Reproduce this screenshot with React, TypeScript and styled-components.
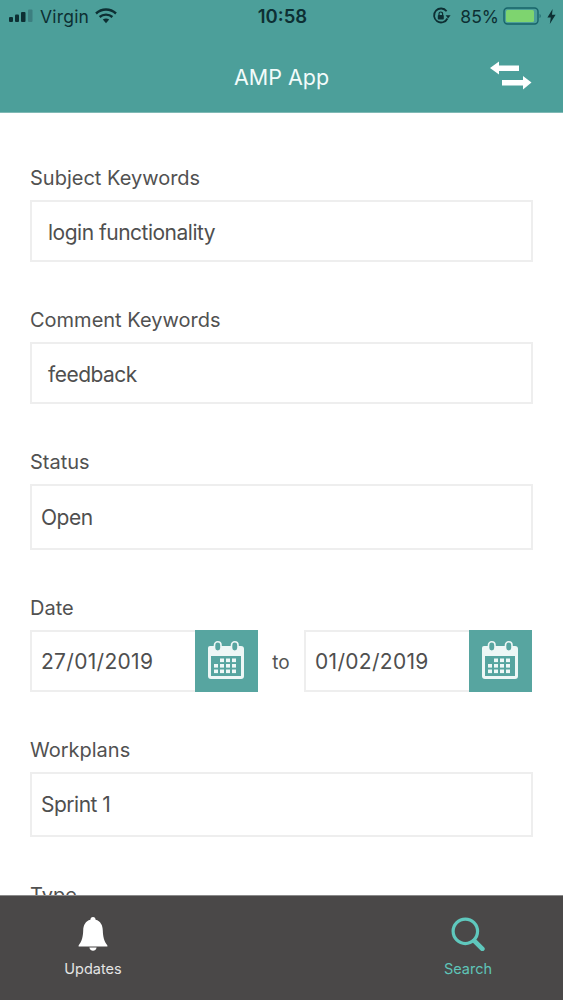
import React from 'react'
import styled, { createGlobalStyle } from 'styled-components'

const GlobalStyle = createGlobalStyle`
  html, body {
    margin: 0;
    padding: 0;
    background: #fff;
  }
  body {
    font-family: Inter, "Liberation Sans", sans-serif;
  }
`

const Screen = styled.div`
  width: 563px;
  height: 1000px;
  display: flex;
  flex-direction: column;
  overflow: hidden;
  background: #fff;
`

const Header = styled.header`
  height: 113px;
  flex-shrink: 0;
  box-sizing: border-box;
  background: #4c9f9a;
  border-bottom: 1px solid #7fb9b5;
  display: flex;
  flex-direction: column;
`

const StatusBar = styled.div`
  height: 32px;
  box-sizing: border-box;
  padding: 0 7px 0 9px;
  display: grid;
  grid-template-columns: 1fr auto 1fr;
  align-items: center;
  color: #0d2f33;
  font-size: 17.5px;
`

const StatusLeft = styled.div`
  display: flex;
  align-items: center;
  gap: 6px;
`

const Carrier = styled.span`
  margin-left: -1px;
  letter-spacing: 0.2px;
`

const StatusRight = styled.div`
  display: flex;
  align-items: center;
  justify-content: flex-end;
  gap: 5px;
`

const BatteryPercent = styled.span`
  margin: 0 -1px 0 4px;
`

const Clock = styled.div`
  font-weight: 600;
  font-size: 18.5px;
`

const TitleBar = styled.div`
  flex: 1;
  display: flex;
  align-items: center;
  justify-content: center;
  position: relative;
  padding-top: 10px;
`

const Title = styled.h1`
  margin: 0;
  font-size: 21.5px;
  font-weight: 400;
  color: #f2fbfa;
`

const SwapButton = styled.div`
  position: absolute;
  right: 31px;
  top: 28px;
  width: 42px;
  height: 30px;
`

const Form = styled.main`
  flex: 1;
  min-height: 0;
  overflow: hidden;
  box-sizing: border-box;
  padding: 53px 30px 0;
  display: flex;
  flex-direction: column;
`

const Field = styled.section`
  flex-shrink: 0;
  margin-bottom: 46px;
`

const Label = styled.div`
  height: 25px;
  margin-bottom: 9px;
  font-size: 20px;
  line-height: 25px;
  color: #515151;
`

const InputBox = styled.div<{ $inset?: number; $height?: number }>`
  height: ${(p) => p.$height ?? 62}px;
  box-sizing: border-box;
  border: 2px solid #eeeeee;
  padding-left: ${(p) => p.$inset ?? 16}px;
  padding-top: ${(p) => (p.$height ? 0 : 2)}px;
  display: flex;
  align-items: center;
  font-size: 21px;
  letter-spacing: -0.5px;
  color: #4f4f4f;
`

const DateRow = styled.div`
  display: flex;
  align-items: center;
  justify-content: space-between;
  padding-right: 1px;
`

const ToText = styled.span`
  padding-top: 2px;
  font-size: 19px;
  color: #555;
`

const DateInput = styled.div`
  width: 228px;
  height: 62px;
  box-sizing: border-box;
  border: 2px solid #eeeeee;
  border-right: 0;
  display: flex;
  align-items: center;
  justify-content: space-between;
  padding-left: 9px;
  font-size: 21px;
  letter-spacing: 0.3px;
  color: #4f4f4f;
`

const CalendarButton = styled.div`
  width: 63px;
  height: 62px;
  margin-top: -2px;
  margin-bottom: -2px;
  background: #57a5a0;
  display: flex;
  align-items: center;
  justify-content: center;
`

const TabBar = styled.nav`
  height: 105px;
  flex-shrink: 0;
  box-sizing: border-box;
  background: #4a4848;
  border-top: 1px solid #8a8a8a;
  display: flex;
  justify-content: space-between;
  padding: 20px 38px 0 36px;
`

const Tab = styled.div<{ $active?: boolean }>`
  width: 114px;
  display: flex;
  flex-direction: column;
  align-items: center;
  gap: 8px;
  font-size: 14.5px;
  color: ${(p) => (p.$active ? '#5fc4b8' : '#e4e4e4')};
`

const IconSlot = styled.div`
  height: 36px;
  display: flex;
  align-items: center;
  justify-content: center;
`

const SignalIcon = () => (
  <svg width="26" height="16" viewBox="0 0 26 16">
    <rect x="0" y="9" width="4" height="5" rx="1" fill="#0d2f33" />
    <rect x="6" y="6.5" width="4" height="7.5" rx="1" fill="#0d2f33" />
    <rect x="12" y="4" width="4.5" height="10" rx="1" fill="#0d2f33" />
    <rect x="19" y="1.5" width="4.5" height="12.5" rx="1" fill="#3c7f80" />
  </svg>
)

const WifiIcon = () => (
  <svg width="22" height="16" viewBox="0 0 22 16">
    <path d="M1 5.5 C6.8 0.2 15.2 0.2 21 5.5" fill="none" stroke="#0d2f33" strokeWidth="2.4" />
    <path d="M4.6 9 C8.2 5.8 13.8 5.8 17.4 9" fill="none" stroke="#0d2f33" strokeWidth="2.4" />
    <path d="M7.8 11.6 L11 15.2 L14.2 11.6 C12.2 10 9.8 10 7.8 11.6 Z" fill="#0d2f33" />
  </svg>
)

const RotationLockIcon = () => (
  <svg width="19" height="18" viewBox="0 0 19 18">
    <path d="M15.4 11.5 A7 7 0 1 1 14.6 4.2" fill="none" stroke="#0d2f33" strokeWidth="1.8" />
    <path d="M13.6 8.2 L18.6 8.2 L16.1 11.4 Z" fill="#0d2f33" />
    <rect x="5.8" y="8" width="6" height="4.6" rx="0.8" fill="#0d2f33" />
    <path d="M7 8 V6.8 A1.8 1.8 0 0 1 10.6 6.8 V8" fill="none" stroke="#0d2f33" strokeWidth="1.2" />
  </svg>
)

const BatteryIcon = () => (
  <svg width="39" height="18" viewBox="0 0 39 18">
    <rect x="1" y="1" width="34" height="16" rx="3.5" fill="none" stroke="#17646a" strokeWidth="1.4" />
    <rect x="3" y="3" width="28" height="12" rx="1.5" fill="#7ed46f" />
    <path d="M36.6 7 C38 7.4 38 10.6 36.6 11 Z" fill="#17646a" />
  </svg>
)

const BoltIcon = () => (
  <svg width="9" height="15" viewBox="0 0 9 15">
    <path d="M5.6 0 L0.4 8.4 H3.8 L2.8 15 L8.6 5.8 H5 Z" fill="#0d2f33" />
  </svg>
)

const SwapIcon = () => (
  <svg width="42" height="30" viewBox="0 0 42 30">
    <path d="M0 8 L9 1.5 V5.5 H29 V11 H9 V14.5 Z" fill="#fff" />
    <path d="M12 20 H33 V16 L41.5 22.5 L33 29.5 V25.5 H12 Z" fill="#fff" />
  </svg>
)

const CalendarIcon = () => (
  <svg width="40" height="40" viewBox="0 0 40 40">
    <path
      d="M3 5 H34 Q37 5 37 8 V35 Q37 38 34 38 H4 Q1 38 1 35 V7 Q1 5 3 5 Z"
      fill="#eef7f6"
    />
    <rect x="4" y="15" width="30" height="20" fill="#57a5a0" />
    <rect x="7.5" y="0.8" width="6.5" height="9.5" rx="3.25" fill="#57a5a0" stroke="#eef7f6" strokeWidth="1.6" />
    <rect x="24.5" y="0.8" width="6.5" height="9.5" rx="3.25" fill="#57a5a0" stroke="#eef7f6" strokeWidth="1.6" />
    {[17.5, 23, 28.5].map((y, row) =>
      [7, 13, 19, 25].map((x, col) =>
        row === 0 && col === 0 ? null : (
          <rect key={`${x}-${y}`} x={x} y={y} width="4" height="3.6" fill="#eef7f6" />
        ),
      ),
    )}
  </svg>
)

const BellIcon = () => (
  <svg width="30" height="34" viewBox="0 0 30 34">
    <path
      d="M15 0 C16.6 0 17.6 1.2 17.6 2.8 C22.6 4 24.6 8.4 24.8 13.4 C25 19.6 26 24 29.4 28.4 V29.6 H0.6 V28.4 C4 24 5 19.6 5.2 13.4 C5.4 8.4 7.4 4 12.4 2.8 C12.4 1.2 13.4 0 15 0 Z"
      fill="#fff"
    />
    <path d="M11.4 30.6 H18.6 C18.2 33 16.6 33.8 15 33.8 C13.4 33.8 11.8 33 11.4 30.6 Z" fill="#fff" />
  </svg>
)

const SearchIcon = () => (
  <svg width="34" height="34" viewBox="0 0 32 32">
    <circle cx="13.5" cy="13.5" r="11.5" fill="none" stroke="#5fc8bd" strokeWidth="3" />
    <path d="M22 22.5 L29.5 30" fill="none" stroke="#5fc8bd" strokeWidth="4.4" strokeLinecap="round" />
  </svg>
)

const App: React.FC = () => {
  return (
    <Screen>
      <GlobalStyle />
      <Header>
        <StatusBar>
          <StatusLeft>
            <SignalIcon />
            <Carrier>Virgin</Carrier>
            <WifiIcon />
          </StatusLeft>
          <Clock>10:58</Clock>
          <StatusRight>
            <RotationLockIcon />
            <BatteryPercent>85%</BatteryPercent>
            <BatteryIcon />
            <BoltIcon />
          </StatusRight>
        </StatusBar>
        <TitleBar>
          <Title>AMP App</Title>
          <SwapButton>
            <SwapIcon />
          </SwapButton>
        </TitleBar>
      </Header>

      <Form>
        <Field>
          <Label>Subject Keywords</Label>
          <InputBox>login functionality</InputBox>
        </Field>
        <Field>
          <Label>Comment Keywords</Label>
          <InputBox>feedback</InputBox>
        </Field>
        <Field>
          <Label>Status</Label>
          <InputBox $inset={9} $height={66}>Open</InputBox>
        </Field>
        <Field>
          <Label>Date</Label>
          <DateRow>
            <DateInput>
              27/01/2019
              <CalendarButton>
                <CalendarIcon />
              </CalendarButton>
            </DateInput>
            <ToText>to</ToText>
            <DateInput>
              01/02/2019
              <CalendarButton>
                <CalendarIcon />
              </CalendarButton>
            </DateInput>
          </DateRow>
        </Field>
        <Field>
          <Label>Workplans</Label>
          <InputBox $inset={9} $height={65}>Sprint 1</InputBox>
        </Field>
        <Field>
          <Label>Type</Label>
        </Field>
      </Form>

      <TabBar>
        <Tab>
          <IconSlot>
            <BellIcon />
          </IconSlot>
          Updates
        </Tab>
        <Tab $active>
          <IconSlot>
            <SearchIcon />
          </IconSlot>
          Search
        </Tab>
      </TabBar>
    </Screen>
  )
}

export default App
